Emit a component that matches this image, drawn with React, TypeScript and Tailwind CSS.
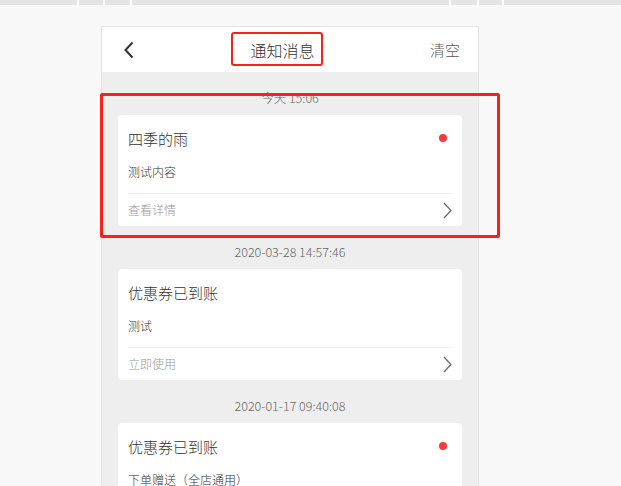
const font = { fontFamily: '"Noto Sans CJK SC", "Noto Sans", sans-serif' };

interface Notice {
  time: string;
  title: string;
  body: string;
  action: string;
  unread: boolean;
}

const notices: Notice[] = [
  { time: "今天 15:06", title: "四季的雨", body: "测试内容", action: "查看详情", unread: true },
  { time: "2020-03-28 14:57:46", title: "优惠券已到账", body: "测试", action: "立即使用", unread: false },
  { time: "2020-01-17 09:40:08", title: "优惠券已到账", body: "下单赠送（全店通用）", action: "立即使用", unread: true },
];

function ChevronLeft() {
  return (
    <svg width="12" height="18" viewBox="0 0 12 18" fill="none">
      <path d="M9.5 1.5 L2.5 9 L9.5 16.5" stroke="#333" strokeWidth="2" />
    </svg>
  );
}

function ChevronRight() {
  return (
    <svg width="9" height="17" viewBox="0 0 9 17" fill="none">
      <path d="M1 1 L8 8.5 L1 16" stroke="#666" strokeWidth="1.2" />
    </svg>
  );
}

function Card({ n }: { n: Notice }) {
  return (
    <div className="bg-white rounded-[4px] px-[10px]">
      <div className="h-[46px] flex items-center justify-between">
        <span className="text-[15px] leading-none text-[#333]">{n.title}</span>
        {n.unread && <span className="w-[8px] h-[8px] rounded-full bg-[#f53b3b] mr-[5px]" />}
      </div>
      <div className="h-[22px] flex items-center text-[12px] leading-none text-[#333]">{n.body}</div>
      <div className="h-[11px] border-b border-[#f0f0f0]" />
      <div className="h-[32px] flex items-center justify-between">
        <span className="text-[12px] leading-none text-[#999]">{n.action}</span>
        <ChevronRight />
      </div>
    </div>
  );
}

export default function App() {
  return (
    <div className="relative w-[621px] h-[486px] overflow-hidden bg-[#f8f8f8] font-light" style={font}>
      <div className="relative h-[5px] bg-[#e4e4e4]">
        {[77, 103, 130, 449, 477, 502].map((x) => (
          <span key={x} className="absolute top-0 w-[2px] h-[5px] bg-white" style={{ left: x }} />
        ))}
      </div>
      <div className="ml-[101px] mt-[21px] w-[378px] h-[460px] border-x border-t border-[#e2e2e2] bg-[#eeeeee]">
        <div className="h-[45px] bg-white flex items-center justify-between pl-[21px] pr-[18px]">
          <ChevronLeft />
          <span className="text-[16px] leading-none text-[#333] ml-[0px]">通知消息</span>
          <span className="text-[15px] leading-none text-[#555]">清空</span>
        </div>
        <div className="px-[16px]">
          {notices.map((n) => (
            <div key={n.time}>
              <div className="pt-[17px] pb-[8px] h-[43px] flex justify-center">
                <span className="h-[18px] flex items-center text-[12.5px] leading-none text-[#666]">{n.time}</span>
              </div>
              <Card n={n} />
            </div>
          ))}
        </div>
      </div>
      <div className="absolute left-[231px] top-[32px] w-[92px] h-[34px] border-2 border-[#f5221b] rounded-[3px]" />
      <div className="absolute left-[100px] top-[93px] w-[400px] h-[145px] border-[3px] border-[#f5221b] rounded-[2px]" />
    </div>
  );
}
